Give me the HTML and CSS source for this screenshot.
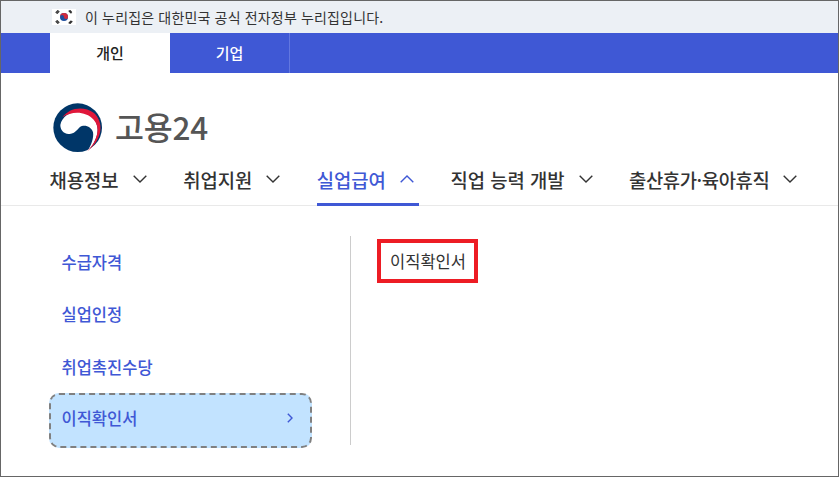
FILE: index.html
```html
<!DOCTYPE html>
<html lang="ko">
<head>
<meta charset="utf-8">
<title>고용24</title>
<link rel="stylesheet" href="styles.css">
</head>
<body>
<div class="frame">
  <div class="gov-bar">
    <svg class="flag" viewBox="0 0 24 16" aria-hidden="true">
      <rect width="24" height="16" fill="#fff"/>
      <circle cx="12" cy="8" r="4" fill="#1f4f9e"/>
      <path d="M8 8a4 4 0 0 1 8 0a2 2 0 0 1-4 0a2 2 0 0 0-4 0z" fill="#d32a3c"/>
      <g stroke="#333" stroke-width="1.1" stroke-linecap="round">
        <path d="M4 3.5l2-2M5 4.5l2-2M17 2l2 2M18 1.5l1.6 1.6"/>
        <path d="M4 12.5l2 2M5 11.5l2 2M17 14l2-2M18 14.5l2-2"/>
      </g>
    </svg>
    <span class="gov-text">이 누리집은 대한민국 공식 전자정부 누리집입니다.</span>
  </div>
  <div class="tabs">
    <a class="tab tab-active">개인</a>
    <a class="tab">기업</a>
  </div>
  <div class="logo">
    <svg class="logo-mark" viewBox="0 0 180 174" aria-hidden="true">
      <circle cx="89" cy="86" r="73" fill="#003668"/>
      <path d="M37 78C42 50 75 32 105 38C140 45 158 85 145 115C140 130 130 147 118 157C130 140 138 115 135 100C130 82 108 75 95 85C85 95 78 106 62 105C45 104 37 92 37 78Z" fill="#fff"/>
      <path d="M43 55C62 28 105 18 138 42C168 70 165 120 118 157C150 122 158 85 137 62C112 36 72 36 43 55Z" fill="#e0173a"/>
    </svg>
    <span class="logo-text">고용24</span>
  </div>
  <nav class="nav">
    <a class="nav-item">채용정보<svg class="chev" viewBox="0 0 14 8"><path d="M.7.7L7 7l6.3-6.3"/></svg></a>
    <a class="nav-item">취업지원<svg class="chev" viewBox="0 0 14 8"><path d="M.7.7L7 7l6.3-6.3"/></svg></a>
    <a class="nav-item nav-active">실업급여<svg class="chev" viewBox="0 0 14 8"><path d="M.7 7.3L7 1l6.3 6.3"/></svg></a>
    <a class="nav-item">직업 능력 개발<svg class="chev" viewBox="0 0 14 8"><path d="M.7.7L7 7l6.3-6.3"/></svg></a>
    <a class="nav-item nav-tight">출산휴가·육아휴직<svg class="chev" viewBox="0 0 14 8"><path d="M.7.7L7 7l6.3-6.3"/></svg></a>
  </nav>
  <div class="panel">
    <ul class="side">
      <li class="side-item">수급자격</li>
      <li class="side-item">실업인정</li>
      <li class="side-item">취업촉진수당</li>
      <li class="side-item side-current">이직확인서<svg class="side-arrow" viewBox="0 0 6 10"><path d="M.8.8L5 5 .8 9.2"/></svg></li>
    </ul>
    <div class="content">
      <div class="highlight">이직확인서</div>
    </div>
  </div>
</div>
</body>
</html>
```
FILE: styles.css
```css
* { box-sizing: border-box; }
html, body { margin: 0; padding: 0; }
body {
  background: #fff;
  font-family: "Noto Sans CJK KR", "Noto Sans", sans-serif;
  color: #222;
}
.frame {
  width: 839px;
  height: 477px;
  border: 1px solid #666;
  overflow: hidden;
  background: #fff;
}
.gov-bar {
  height: 32px;
  background: #ecf0f5;
  display: flex;
  align-items: center;
  padding-left: 51px;
  gap: 9px;
}
.flag { width: 24px; height: 16px; display: block; }
.gov-text { font-size: 14px; letter-spacing: 0.16px; color: #333; line-height: 1; }
.tabs {
  height: 40px;
  background: #3f58d5;
  display: flex;
  padding-left: 49px;
}
.tab {
  width: 120px;
  padding-bottom: 1px;
  display: flex;
  align-items: center;
  justify-content: center;
  color: #fff;
  font-size: 15px;
  font-weight: 500;
  border-right: 1px solid #6277e0;
}
.tab-active { background: #fff; color: #222; border-right: 0; }
.logo {
  height: 88px;
  display: flex;
  align-items: center;
  padding: 22px 0 0 47px;
}
.logo-mark { width: 60px; height: 58px; display: block; }
.logo-text {
  font-size: 31.5px;
  font-weight: 500;
  color: #555;
  margin: 0 0 3px 7px;
  line-height: 1;
  letter-spacing: -0.2px;
}
.nav {
  height: 45px;
  display: flex;
  gap: 31.5px;
  padding-left: 48.5px;
  border-bottom: 1px solid #e9e9e9;
}
.nav-item {
  display: flex;
  align-items: center;
  gap: 14px;
  height: 45px;
  padding: 0 5px 6px 0;
  font-size: 18.8px;
  font-weight: 500;
  color: #333;
  border-bottom: 3px solid transparent;
}
.nav-tight { letter-spacing: -0.4px; }
.nav-active { color: #3f58d5; border-bottom-color: #3f58d5; }
.chev { width: 14px; height: 8px; flex: none; }
.chev path { fill: none; stroke: currentColor; stroke-width: 1.4; }
.panel {
  display: flex;
  padding: 30px 0 0 48px;
}
.side {
  list-style: none;
  margin: 0;
  padding: 0 38px 0 0;
  width: 302px;
  height: 209px;
  border-right: 1px solid #ccc;
}
.side-item {
  height: 52px;
  margin-bottom: 0.5px;
  padding: 0 0 1px 12.5px;
  display: flex;
  align-items: center;
  justify-content: space-between;
  font-size: 16.5px;
  font-weight: 500;
  color: #3f58d5;
}
.side-current {
  width: 263px;
  height: 55px;
  margin-top: -1px;
  background: #c2e3ff;
  border: 2px dashed #808080;
  border-radius: 10px;
  padding: 0 17px 4px 10.5px;
}
.side-arrow { width: 6px; height: 10px; }
.side-arrow path { fill: none; stroke: currentColor; stroke-width: 1.4; }
.content { padding: 3px 0 0 26px; }
.highlight {
  width: 101px;
  height: 44px;
  border: 4px solid #ed1c24;
  display: flex;
  align-items: center;
  justify-content: center;
  padding-left: 1px;
  font-size: 16.5px;
  color: #333;
}
```
